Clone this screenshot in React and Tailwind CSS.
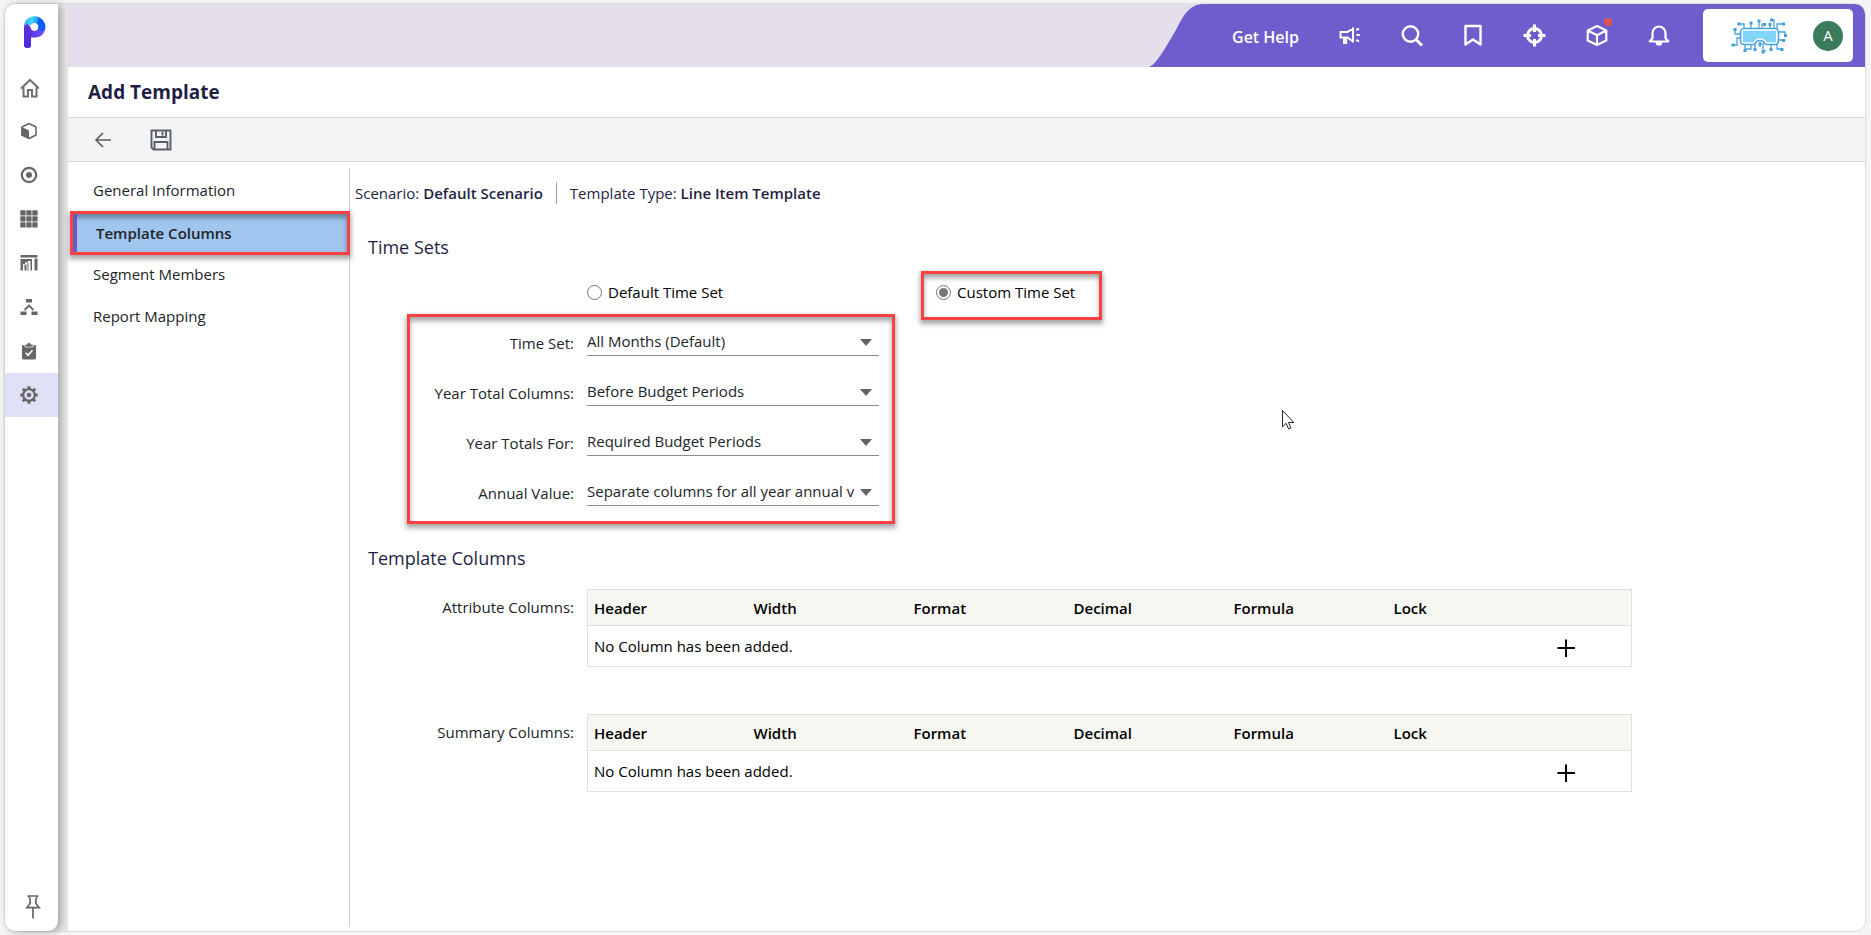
import { useState } from 'react'
import clsx from 'clsx'

const SECTIONS = ['General Information', 'Template Columns', 'Segment Members', 'Report Mapping']

const TIME_FIELDS = [
  { id: 'time-set', label: 'Time Set:', options: ['All Months (Default)'] },
  { id: 'year-total-columns', label: 'Year Total Columns:', options: ['Before Budget Periods'] },
  { id: 'year-totals-for', label: 'Year Totals For:', options: ['Required Budget Periods'] },
  { id: 'annual-value', label: 'Annual Value:', options: ['Separate columns for all year annual values'] },
]

const COLUMN_HEADERS = ['Header', 'Width', 'Format', 'Decimal', 'Formula', 'Lock']

const HIGHLIGHT =
  'border-3 border-[#fb4141] shadow-[0_3px_5px_1px_rgba(0,0,0,0.35),inset_0_4px_5px_rgba(0,0,0,0.35)]'

function Logo() {
  return (
    <svg width="22" height="32" viewBox="0 0 22 32">
      <defs>
        <linearGradient id="stem" x1="0" y1="0" x2="0" y2="1">
          <stop offset="0" stopColor="#5a35e0" />
          <stop offset="1" stopColor="#4b2bd6" />
        </linearGradient>
        <linearGradient id="bowl" x1="0" y1="0" x2="1" y2="0">
          <stop offset="0" stopColor="#5330dc" />
          <stop offset="1" stopColor="#6f4cff" />
        </linearGradient>
        <linearGradient id="sky" x1="0" y1="0" x2="1" y2="0">
          <stop offset="0" stopColor="#2ea8f0" />
          <stop offset="0.5" stopColor="#45d6fa" />
          <stop offset="1" stopColor="#1798f2" />
        </linearGradient>
      </defs>
      <path d="M0 10V28.500a3.500 3.500 0 0 0 7 0V21.500h4a10.500 10.500 0 0 0 9.800-7L14 11a3.700 3.700 0 0 1-7 1.500L3 8Z" fill="url(#bowl)" />
      <path d="M0 10V28.500a3.500 3.500 0 0 0 7 0V12L3.500 7Z" fill="url(#stem)" />
      <path d="M0 10A10.600 10.600 0 0 1 14.500.9L13 8a3.700 3.700 0 0 0-6 2Q4 6 0 10Z" fill="url(#sky)" />
      <path d="M14.500.9A10.600 10.600 0 0 1 20.800 14.500Q17 16 14 12.500L14.200 10 12.800 7.800Z" fill="#0d5ff7" />
      <circle cx="10.500" cy="11" r="3.700" fill="#fff" />
    </svg>
  )
}

function HomeIcon() {
  return (
    <svg width="20" height="24" viewBox="-1 -3.500 20 24" fill="none" stroke="#707070" strokeWidth="2">
      <path d="M1 10 10 1.500l9 8.500" />
      <path d="M3.500 8.500v9.500H8v-6.500h4V18h4.500V8.500" />
    </svg>
  )
}

function ModelIcon() {
  return (
    <svg width="18" height="18" viewBox="0 0 18 18">
      <path d="M9 1.500 16 5v8l-7 3.500L2 13V5Z" fill="none" stroke="#666" strokeWidth="1.600" strokeLinejoin="round" />
      <path d="M1.200 4.800 9 8.500v8.300L1.200 13.300Z" fill="#666" />
    </svg>
  )
}

function TargetIcon() {
  return (
    <svg width="18" height="18" viewBox="0 0 18 18">
      <circle cx="9" cy="9" r="7.200" fill="none" stroke="#666" strokeWidth="2.200" />
      <circle cx="9" cy="9" r="3" fill="#666" />
    </svg>
  )
}

function GridIcon() {
  return (
    <svg width="18" height="18" viewBox="0 0 18 18" fill="#666">
      {[1, 7, 13].map(y =>
        [1, 7, 13].map(x => <rect key={`${x}-${y}`} x={x - 0.700} y={y - 0.700} width="5.300" height="5.300" rx="0.600" />)
      )}
    </svg>
  )
}

function ReportIcon() {
  return (
    <svg width="18" height="18" viewBox="0 0 18 18" fill="#666">
      <path d="M1.500 1h15a1 1 0 0 1 1 1v1.500H.5V2a1 1 0 0 1 1-1ZM.5 5H12v2H8v1.500H5V10H3v6.500H.5ZM4.500 10.500h2v6H4.500ZM10.500 7H12v9.500h-1.500ZM7.500 9h1v7.500h-1ZM14.500 4.500h3v12h-3Z" />
    </svg>
  )
}

function HierarchyIcon() {
  return (
    <svg width="18" height="18" viewBox="0 0 18 18">
      <path d="M6 1h6v3.500H6ZM.5 13.500h6V17h-6ZM11.500 13.500h6V17h-6Z" fill="#666" />
      <path d="M4.500 12 9 7.500l4.500 4.500" fill="none" stroke="#666" strokeWidth="1.800" />
    </svg>
  )
}

function TaskIcon() {
  return (
    <svg width="18" height="18" viewBox="0 0 18 18">
      <path d="M2 3.200H16V16a1.400 1.400 0 0 1-1.400 1.400H3.400A1.400 1.400 0 0 1 2 16Z" fill="#666" />
      <path d="M5 2.200h2.200a1.800 1.800 0 0 1 3.600 0H13V5H5Z" fill="#666" stroke="#fff" strokeWidth="0.700" />
      <path d="m5.800 10.800 2.300 2.400 4.300-5" fill="none" stroke="#fff" strokeWidth="1.700" />
    </svg>
  )
}

function GearIcon() {
  return (
    <svg width="18" height="18" viewBox="0 0 18 18" stroke="#666" fill="none">
      <circle cx="9" cy="9" r="5.800" strokeWidth="2.200" />
      <circle cx="9" cy="9" r="2.300" fill="#666" stroke="none" />
      <path d="M9 .3v3M9 14.700v3M.3 9h3M14.700 9h3M2.800 2.800l2 2M13.200 13.200l2 2M2.800 15.200l2-2M13.200 4.800l2-2" strokeWidth="2.800" />
    </svg>
  )
}

const SIDE_ITEMS = [
  { name: 'Home', Icon: HomeIcon },
  { name: 'Modeling', Icon: ModelIcon },
  { name: 'Planning', Icon: TargetIcon },
  { name: 'Spotlight', Icon: GridIcon },
  { name: 'Reporting', Icon: ReportIcon },
  { name: 'Consolidation', Icon: HierarchyIcon },
  { name: 'Tasks', Icon: TaskIcon },
  { name: 'Maintenance', Icon: GearIcon },
]

function Sidebar() {
  return (
    <aside className="relative z-10 flex w-[53px] shrink-0 flex-col rounded-l-[10px] rounded-br-[10px] bg-white shadow-[3px_1px_8px_rgba(0,0,0,0.3)]">
      <a href="#home" aria-label="Home page" className="flex h-[61px] items-start pt-3 pl-[19px]">
        <Logo />
      </a>
      <nav className="flex flex-col">
        {SIDE_ITEMS.map(({ name, Icon }) => (
          <button
            key={name}
            type="button"
            aria-label={name}
            className={clsx(
              'flex h-11 items-center justify-center pr-[5px]',
              name === 'Maintenance' && 'bg-[#e0e0f6]'
            )}
          >
            <Icon />
          </button>
        ))}
      </nav>
      <button type="button" aria-label="Pin menu" className="mt-auto mb-3 flex justify-center pl-[3px]">
        <svg width="16" height="24" viewBox="0 0 16 24" fill="none" stroke="#666" strokeWidth="1.700">
          <path d="M2.500 1h11M4 1.500Q6.500 7 4 10L1.800 12.700h12.400L12 10Q9.500 7 12 1.500M8 13v10.500" />
        </svg>
      </button>
    </aside>
  )
}

function CompanyLogo() {
  return (
    <svg width="56" height="36" viewBox="0 0 56 36" fill="none" stroke="#4aa3df" strokeWidth="1.300">
      <path d="M10 16H4v-4M13 11V6H8M20 11V5M28 11V3M31 11V6h3M39 11V6M43 11V2h-3M46 11V6h6M48 14h6v4M48 22h4M46 25v6h5M40 25v6M32 25v8h3M24 25v6M20 25v6h-5M14 25v7M10 20H6v7H2" />
      <path
        d="M2.500 10h3v3h-3ZM6.500 4.500h3v3h-3ZM18.500 3.500h3v3h-3ZM26.500 1.500h3v3h-3ZM32 5h3v3h-3ZM37.500 5h3v3h-3ZM39 .5h3v3h-3ZM51 4.500h3v3h-3ZM53 16h3v3h-3ZM51 21h3v3h-3ZM49.500 30h3v3h-3ZM38.500 30h3v3h-3ZM30.500 32.500h3v3h-3ZM22.500 30h3v3h-3ZM12.500 31h3v3h-3ZM.5 25.500h3v3h-3Z"
        fill="#3f9fe0"
        stroke="none"
      />
      <path
        d="M13 10.500h31a3.500 3.500 0 0 1 3.500 3.500v9a3.500 3.500 0 0 1-3.500 3.500h-8.500q-1.500 0-2-1.500-1.200-2.500-4.500-2.500t-4.500 2.500q-.5 1.500-2 1.500H13a3.500 3.500 0 0 1-3.500-3.500V14a3.500 3.500 0 0 1 3.500-3.500Z"
        fill="#fff"
        strokeWidth="1.600"
      />
      <path d="M12 12.800h33v11.400h-9.500l-1-1.700q-5.500-4.500-11 0l-1 1.700H12Z" fill="#82d3f8" stroke="none" />
      <path d="M29 24v5" />
      <path d="M27.500 24.500h3v3h-3Z" fill="#3f9fe0" stroke="none" />
    </svg>
  )
}

const TOP_ICONS = [
  {
    name: 'Announcements',
    art: (
      <path
        d="M16 3.500v15M16 4.500 10.500 8H3.500v5.500h7L16 17.500M7 14v5h2.200v-4.500M19.200 6l2.800-1.400M19.500 11h3.300M19.200 16l2.800 1.400"
        strokeWidth="2"
      />
    ),
  },
  {
    name: 'Search',
    art: (
      <g strokeWidth="2.400">
        <circle cx="11.500" cy="10" r="7.700" />
        <path d="m17 15.500 6 6" strokeWidth="3" />
      </g>
    ),
  },
  { name: 'Bookmarks', art: <path d="M4.500 2h15v18.500L12 15.500l-7.500 5Z" strokeWidth="2.400" strokeLinejoin="round" /> },
  {
    name: 'Navigate',
    art: (
      <g>
        <circle cx="11.500" cy="11.500" r="7" strokeWidth="3" />
        <path d="M11.500.5v7.500M11.500 15v7.500M.5 11.500H8M15 11.500h7.500" strokeWidth="3" />
      </g>
    ),
  },
  {
    name: 'Products',
    dot: true,
    art: <path d="M12 2 21.300 6.500v10L12 21l-9.300-4.500v-10ZM2.700 6.500 12 11.200l9.300-4.700M12 11.200V21" strokeWidth="2.200" strokeLinejoin="round" />,
  },
  {
    name: 'Notifications',
    art: (
      <g strokeWidth="2.200">
        <path d="M2.800 17.500h18.400L18.500 14V9a6.500 6.500 0 0 0-13 0v5Z" strokeLinejoin="round" />
        <path d="M9.800 18.500a2.200 2.200 0 0 0 4.400 0Z" fill="#fff" />
      </g>
    ),
  },
]

function TopBar() {
  return (
    <header className="flex h-[63px] shrink-0 justify-end overflow-hidden rounded-tr-[10px] bg-[#e5dfeb]">
      <svg width="56" height="63" viewBox="0 0 56 63" fill="#6f5ccd" className="shrink-0">
        <path d="M1 63C6 61 11 54 16 46L28 26C37 8 43 0 56 0V63Z" />
      </svg>
      <div className="flex items-center bg-[#6f5ccd] pr-3 pl-7">
        <a href="#help" className="mr-[38px] pt-[2px] text-base font-semibold text-white">Get Help</a>
        <div className="mr-8 flex items-center gap-[38px]">
          {TOP_ICONS.map(({ name, art, dot }) => (
            <button key={name} type="button" aria-label={name} className="relative">
              <svg width="24" height="24" viewBox="0 0 24 24" fill="none" stroke="#fff">
                {art}
              </svg>
              {dot && <span className="absolute -top-[6px] -right-[3px] size-2 rounded-full bg-[#e0544f]" />}
            </button>
          ))}
        </div>
        <div className="flex h-[53px] w-[150px] items-center justify-end gap-[26px] rounded-[5px] bg-white pr-[10px]">
          <CompanyLogo />
          <button type="button" className="size-[30px] rounded-full bg-[#3b7a5a] text-[15px] text-white">A</button>
        </div>
      </div>
    </header>
  )
}

function Toolbar() {
  return (
    <div className="flex h-[45px] shrink-0 items-center gap-[38px] border-y border-[#d8d8d8] bg-[#f4f4f4] pl-[26px]">
      <button type="button" aria-label="Back">
        <svg width="18" height="18" viewBox="0 0 18 18" fill="none" stroke="#5d5d5d" strokeWidth="1.600">
          <path d="M17 9H2M9 2 2 9l7 7" />
        </svg>
      </button>
      <button type="button" aria-label="Save">
        <svg width="22" height="22" viewBox="0 0 22 22" fill="none" stroke="#5a5f66" strokeWidth="1.900">
          <path d="M1.500 1.500h19v19H3.500l-2-2ZM6 1.500V8h10V1.500M4.500 20.500V13h13v7.500" />
          <path d="M12.500 3v3.500" strokeWidth="2" />
        </svg>
      </button>
    </div>
  )
}

function SectionNav({ active, onSelect }) {
  return (
    <nav className="mt-[6px] mb-[5px] w-[282px] shrink-0 border-r border-[#cfcfcf] pt-px">
      {SECTIONS.map(section => (
        <button
          key={section}
          type="button"
          onClick={() => onSelect(section)}
          className={clsx(
            'flex items-center text-left text-[15px]',
            section === active
              ? `relative z-10 -mb-[2px] ml-[2px] h-11 w-[280px] bg-[#a0c6f0] font-semibold text-[#212529] ${HIGHLIGHT}`
              : 'h-[42px] w-full pl-[25px] text-[#212529]'
          )}
        >
          {section === active && <span className="mr-[19px] h-full w-1 bg-[#5f5fc4]" />}
          {section}
        </button>
      ))}
    </nav>
  )
}

function SelectField({ id, label, options }) {
  return (
    <div className="flex h-[50px] items-start">
      <label htmlFor={id} className="w-[164px] pt-3 text-right leading-6">{label}</label>
      <div className="relative ml-[13px] w-[292px]">
        <select
          id={id}
          className="block h-[37px] w-full appearance-none border-b border-[#8c8c8c] bg-transparent pt-[9px] pr-[25px] outline-none"
        >
          {options.map(o => <option key={o}>{o}</option>)}
        </select>
        <svg width="12" height="7" viewBox="0 0 12 7" className="pointer-events-none absolute top-5 right-[7px]" fill="#5f6368">
          <path d="M0 0h12L6 7Z" />
        </svg>
      </div>
    </div>
  )
}

function ColumnsTable({ label }) {
  return (
    <div className="flex items-start">
      <div className="w-[224px] shrink-0 pt-[6px] text-right leading-6">{label}</div>
      <table aria-label={label} className="ml-[13px] w-full max-w-[1045px] table-fixed border-collapse border border-[#e0e0e0] text-left text-black">
        <thead>
          <tr className="h-9 border-b border-[#e0e0e0] bg-[#f6f7f1]">
            {COLUMN_HEADERS.map(h => (
              <th key={h} className="w-[160px] pt-[2px] pl-[6px] font-semibold">{h}</th>
            ))}
            <th aria-label="Actions" />
          </tr>
        </thead>
        <tbody>
          <tr className="h-[41px]">
            <td colSpan={6} className="pl-[6px]">No Column has been added.</td>
            <td className="pt-1 pl-[6px]">
              <button type="button" aria-label="Add column" className="block">
                <svg width="24" height="24" viewBox="0 0 24 24" stroke="#000" strokeWidth="2">
                  <path d="M12 3.500v17.500M3.500 12H21" />
                </svg>
              </button>
            </td>
          </tr>
        </tbody>
      </table>
    </div>
  )
}

export default function App() {
  const [section, setSection] = useState('Template Columns')
  const [timeSet, setTimeSet] = useState('custom')

  return (
    <div className="flex h-screen bg-[#f5f5f5] pt-1 pr-[6px] pb-1 pl-[5px] font-['Open_Sans',sans-serif] text-[#212529]">
      <div className="flex min-w-0 flex-1 rounded-[10px] bg-[#e8e8e8] shadow-[0_0_2px_rgba(0,0,0,0.3)]">
        <Sidebar />
        <div className="ml-[10px] flex min-w-0 flex-1 flex-col rounded-r-[10px] bg-white">
          <TopBar />
          <div className="flex h-[50px] shrink-0 items-center pl-5">
            <h1 className="text-[19px] font-bold text-[#1f1f45]">Add Template</h1>
          </div>
          <Toolbar />

          <div className="flex min-h-0 flex-1">
            <SectionNav active={section} onSelect={setSection} />

            <main className="relative min-w-0 flex-1 pt-[19px] text-[15px]">
              <div className="flex items-center pl-[5px] leading-6 text-[#1f1f45]">
                <p>Scenario: <strong className="font-semibold">Default Scenario</strong></p>
                <span className="mx-[13px] h-[22px] w-px bg-[#9a9a9a]" />
                <p>Template Type: <strong className="font-semibold">Line Item Template</strong></p>
              </div>

              <h2 className="mt-7 pl-[18px] text-lg text-[#1f1f45]">Time Sets</h2>

              <div className="mt-[10px] flex h-[49px] pl-[237px] text-black">
                <label className="flex w-[334px] items-center gap-[6px] pb-[6px]">
                  <input
                    type="radio"
                    name="timeset"
                    className="size-[15px] accent-[#767676]"
                    checked={timeSet === 'default'}
                    onChange={() => setTimeSet('default')}
                  />
                  Default Time Set
                </label>
                <label className={clsx('flex w-[181px] items-center gap-[6px] pb-[6px] pl-3', HIGHLIGHT)}>
                  <input
                    type="radio"
                    name="timeset"
                    className="size-[15px] accent-[#767676]"
                    checked={timeSet === 'custom'}
                    onChange={() => setTimeSet('custom')}
                  />
                  Custom Time Set
                </label>
              </div>

              {/* Custom time set options */}
              <div className={clsx('-mt-[6px] ml-[57px] w-[488px] pt-[2px] pb-[2px]', HIGHLIGHT)}>
                {TIME_FIELDS.map(field => <SelectField key={field.id} {...field} />)}
              </div>

              <h2 className="mt-5 pl-[18px] text-lg text-[#1f1f45]">Template Columns</h2>

              <div className="mt-[17px] flex flex-col gap-[47px] pr-5">
                <ColumnsTable label="Attribute Columns:" />
                <ColumnsTable label="Summary Columns:" />
              </div>

              {/* Mouse pointer */}
              <svg width="13" height="20" viewBox="0 0 13 20" className="pointer-events-none absolute top-[248px] left-[932px]">
                <path d="M.5.5v16.300l3.600-3.500 2.500 5.600 2.300-1-2.400-5.400h5.200Z" fill="#fff" stroke="#222" />
              </svg>
            </main>
          </div>
        </div>
      </div>
    </div>
  )
}
